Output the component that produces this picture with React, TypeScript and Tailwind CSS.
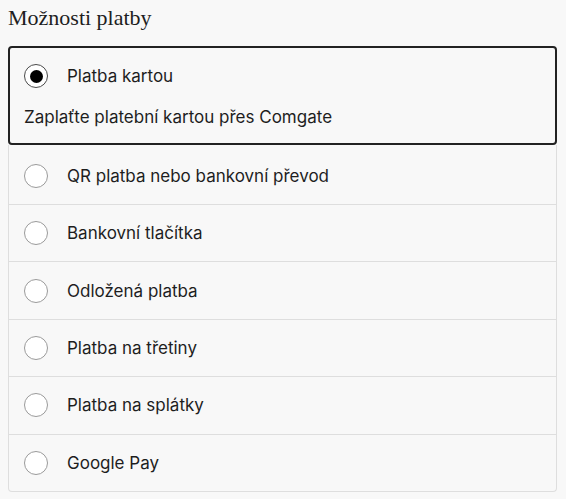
import React from "react";

const methods = [
  "QR platba nebo bankovní převod",
  "Bankovní tlačítka",
  "Odložená platba",
  "Platba na třetiny",
  "Platba na splátky",
  "Google Pay",
];

function Radio({ checked }: { checked?: boolean }) {
  return (
    <span
      className={
        checked
          ? "flex h-6 w-6 shrink-0 items-center justify-center rounded-full border border-[#4a4a4a] bg-white"
          : "flex h-6 w-6 shrink-0 items-center justify-center rounded-full border border-[#9a9a9a] bg-white"
      }
    >
      {checked && <span className="h-[13px] w-[13px] rounded-full bg-black" />}
    </span>
  );
}

export default function App() {
  return (
    <div
      className="min-h-[499px] w-[566px] bg-[#f8f8f8] text-[#1e1e1e]"
      style={{ fontFamily: "Inter, 'Liberation Sans', sans-serif" }}
    >
      <div className="ml-2 w-[549px]">
        <div
          className="text-[22px] leading-[35px] text-[#1e1e1e]"
          style={{ fontFamily: "'Liberation Serif', serif" }}
        >
          Možnosti platby
        </div>
        <div className="mt-[11px]">
          <div className="rounded-[4px] border-2 border-[#222] pl-[14px] pt-[16px] pb-[14px]">
            <div className="flex h-6 items-center gap-[19px]">
              <Radio checked />
              <span className="text-[17px] leading-6">Platba kartou</span>
            </div>
            <div className="mt-[17px] text-[17px] leading-6">
              Zaplaťte platební kartou přes Comgate
            </div>
          </div>
          <div className="rounded-b-[4px] border-x border-b border-[#dedede]">
            {methods.map((m, i) => (
              <div
                key={m}
                className={
                  i === 0
                    ? "flex h-[59px] items-center gap-[19px] pl-[15px] pt-[2px]"
                    : "flex h-[57.4px] items-center gap-[19px] border-t border-[#dedede] pl-[15px]"
                }
              >
                <Radio />
                <span className="text-[17px] leading-6">{m}</span>
              </div>
            ))}
          </div>
        </div>
      </div>
    </div>
  );
}
